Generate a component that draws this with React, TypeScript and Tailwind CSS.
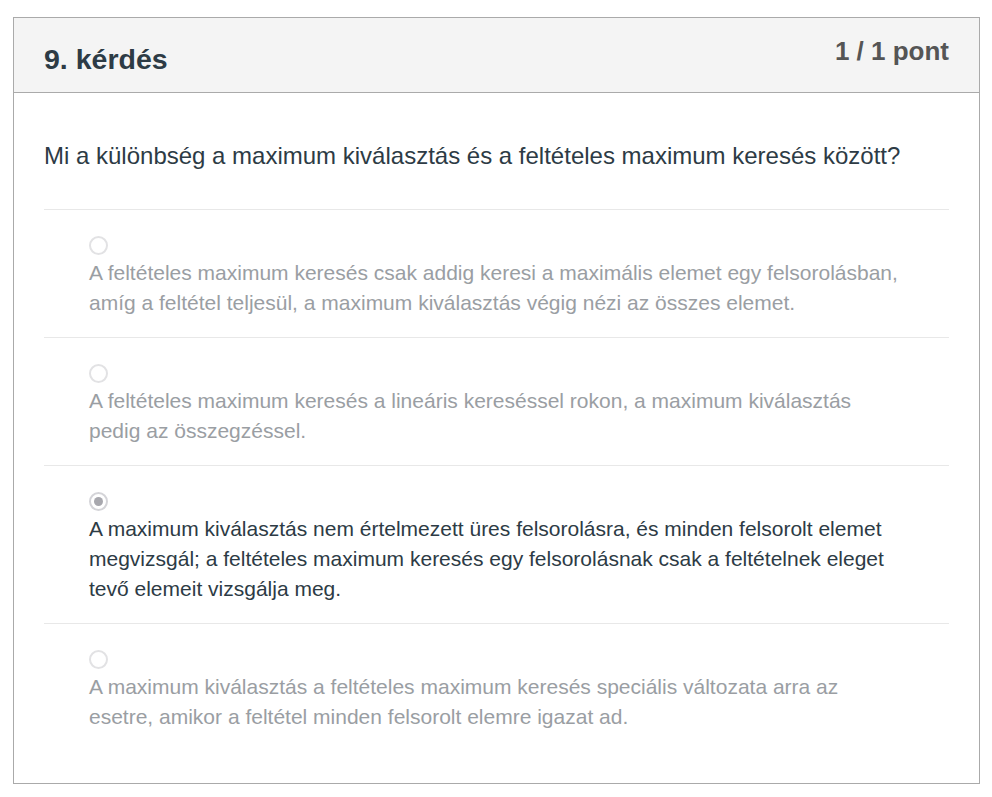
const options = [
  {
    text: "A feltételes maximum keresés csak addig keresi a maximális elemet egy felsorolásban, amíg a feltétel teljesül, a maximum kiválasztás végig nézi az összes elemet.",
    selected: false,
  },
  {
    text: "A feltételes maximum keresés a lineáris kereséssel rokon, a maximum kiválasztás pedig az összegzéssel.",
    selected: false,
  },
  {
    text: "A maximum kiválasztás nem értelmezett üres felsorolásra, és minden felsorolt elemet megvizsgál; a feltételes maximum keresés egy felsorolásnak csak a feltételnek eleget tevő elemeit vizsgálja meg.",
    selected: true,
  },
  {
    text: "A maximum kiválasztás a feltételes maximum keresés speciális változata arra az esetre, amikor a feltétel minden felsorolt elemre igazat ad.",
    selected: false,
  },
];

function Radio({ checked }: { checked: boolean }) {
  if (checked) {
    return (
      <div className="w-[19px] h-[19px] rounded-full border-2 border-[#d4d4d8] flex items-center justify-center bg-white">
        <div className="w-[9px] h-[9px] rounded-full bg-[#a8a8ae]" />
      </div>
    );
  }
  return <div className="w-[19px] h-[19px] rounded-full border-2 border-[#e2e2e4] bg-white" />;
}

export default function App() {
  return (
    <div
      className="min-h-screen bg-white pt-[17px] px-[13px]"
      style={{ fontFamily: '"Liberation Sans", Arial, sans-serif' }}
    >
      <div className="w-[967px] border border-[#aaaaaa] bg-white">
        {/* Header */}
        <div className="h-[75px] bg-[#f4f4f4] border-b border-[#aaaaaa] px-[30px] flex justify-between">
          <h2 className="pt-[23px] text-[28.5px] leading-[36px] font-bold text-[#2d3b45]">
            9. kérdés
          </h2>
          <div className="pt-[17px] text-[26px] leading-[32px] font-bold text-[#555555]">
            1 / 1 pont
          </div>
        </div>

        {/* Body */}
        <div className="px-[30px] pt-[48px] pb-[32px]">
          <p className="text-[24px] leading-[30px] text-[#2d3b45] mb-[38px]">
            Mi a különbség a maximum kiválasztás és a feltételes maximum keresés között?
          </p>

          {options.map((o, i) => (
            <div key={i} className="border-t border-[#e8e8e8] pt-[26px] pb-[19px]">
              <div className="pl-[45px] pr-[45px]">
                <Radio checked={o.selected} />
                <div
                  className={`mt-[3px] text-[21px] leading-[30px] ${
                    o.selected ? "text-[#2d3b45]" : "text-[#9a9ea3]"
                  }`}
                >
                  {o.text}
                </div>
              </div>
            </div>
          ))}
        </div>
      </div>
    </div>
  );
}
